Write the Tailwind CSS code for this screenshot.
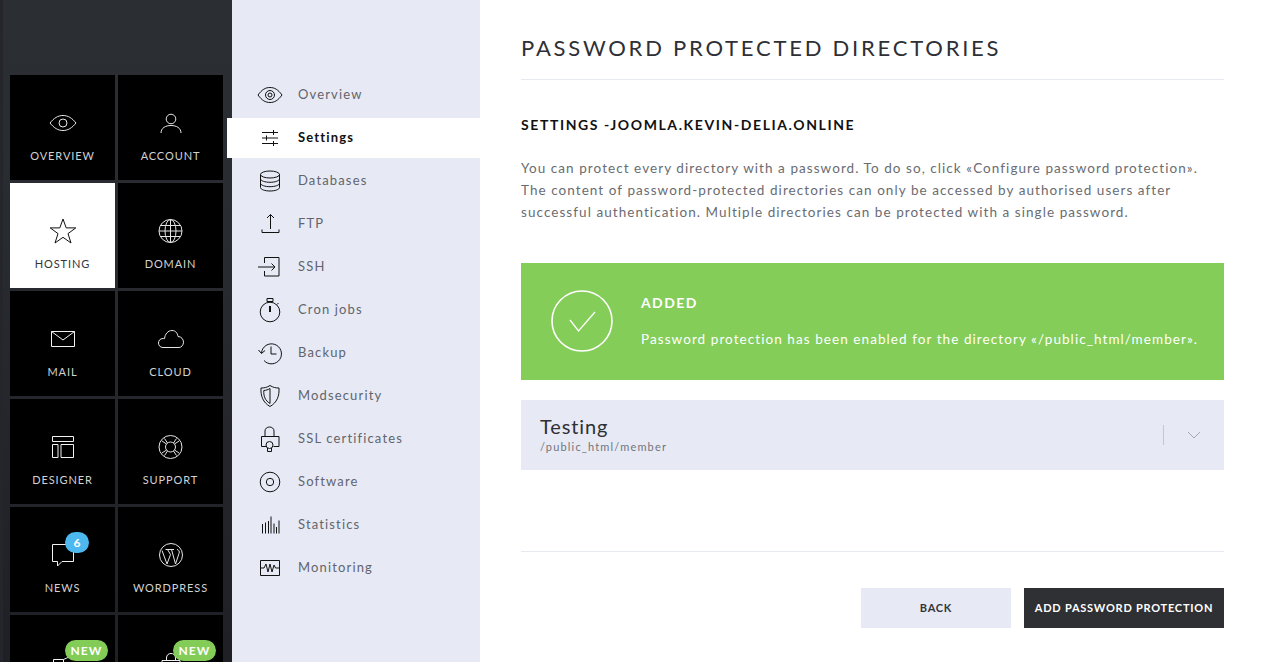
<!DOCTYPE html>
<html lang="en">
  <head>
    <meta charset="UTF-8" />
    <title>Password protected directories</title>
    <script src="https://cdn.jsdelivr.net/npm/@tailwindcss/browser@4"></script>
  </head>
  <body class="bg-white h-screen overflow-hidden font-['Lato','Liberation_Sans',sans-serif]">
    <div class="flex h-[662px] overflow-hidden">
      <!-- Tile sidebar -->
      <aside class="w-[232px] shrink-0 h-full pt-[75px] pl-[7px] border-l-[3px] border-[#24262b] bg-[linear-gradient(180deg,#2b2e33_0%,#282b30_35%,#1f2026_100%)]">
        <div class="grid grid-cols-[105px_105px] auto-rows-[105px] gap-[3px] text-[#d2d2d2] text-[11px] tracking-[0.9px]">
          <a class="bg-black flex flex-col items-center pt-[32px]">
            <svg class="w-8 h-8" viewBox="0 0 32 32" fill="none" stroke="#e6e6e6"><path d="M3 16C7 11 11 8.5 16 8.5S25 11 29 16C25 21 21 23.5 16 23.5S7 21 3 16Z"/><circle cx="16" cy="16" r="4"/></svg>
            <span class="mt-[9px] leading-[16px]">OVERVIEW</span>
          </a>
          <a class="bg-black flex flex-col items-center pt-[32px]">
            <svg class="w-8 h-8" viewBox="0 0 32 32" fill="none" stroke="#e6e6e6"><circle cx="16" cy="12" r="4.8"/><path d="M6 26C6 21 10.5 18.5 16 18.5S26 21 26 26"/></svg>
            <span class="mt-[9px] leading-[16px]">ACCOUNT</span>
          </a>
          <a class="bg-white text-[#33353a] flex flex-col items-center pt-[32px]">
            <svg class="w-8 h-8" viewBox="0 0 32 32" fill="none" stroke="#111"><path d="M16 4L19.2 12.9H28.8L21 18.6L24 28L16 22.3L8 28L11 18.6L3.2 12.9H12.8Z"/></svg>
            <span class="mt-[9px] leading-[16px]">HOSTING</span>
          </a>
          <a class="bg-black flex flex-col items-center pt-[32px]">
            <svg class="w-8 h-8" viewBox="0 0 32 32" fill="none" stroke="#e6e6e6"><circle cx="15.5" cy="16" r="11.5"/><ellipse cx="15.5" cy="16" rx="5.5" ry="11.5"/><path d="M15.5 4.5V27.5M4 16H27M5.5 10.5H25.5M5.5 21.5H25.5"/></svg>
            <span class="mt-[9px] leading-[16px]">DOMAIN</span>
          </a>
          <a class="bg-black flex flex-col items-center pt-[32px]">
            <svg class="w-8 h-8" viewBox="0 0 32 32" fill="none" stroke="#f2f2f2"><path d="M4.5 8.5H27.5V23.5H4.5ZM4.5 8.5L16 17L27.5 8.5"/></svg>
            <span class="mt-[9px] leading-[16px]">MAIL</span>
          </a>
          <a class="bg-black flex flex-col items-center pt-[32px]">
            <svg class="w-8 h-8" viewBox="0 0 32 32" fill="none" stroke="#e6e6e6"><path d="M8 24.5C5 24.5 3.5 22.3 3.5 20S5 15.5 8 15.5C8.5 15.5 9 15.5 9.5 15.7C10 11 13 7.5 17 7.5C20.5 7.5 22.5 10 23 13.5C26.5 13.5 28.5 16.5 28.5 19.2S26.5 24.5 24 24.5Z"/></svg>
            <span class="mt-[9px] leading-[16px]">CLOUD</span>
          </a>
          <a class="bg-black flex flex-col items-center pt-[32px]">
            <svg class="w-8 h-8" viewBox="0 0 32 32" fill="none" stroke="#f2f2f2"><path d="M5.5 5.5H26.5V10.5H5.5ZM5.5 13.5H11V26.5H5.5ZM14 13.5H26.5V26.5H14Z"/></svg>
            <span class="mt-[9px] leading-[16px]">DESIGNER</span>
          </a>
          <a class="bg-black flex flex-col items-center pt-[32px]">
            <svg class="w-8 h-8" viewBox="0 0 32 32" fill="none" stroke="#e6e6e6"><circle cx="15.5" cy="16" r="11.5"/><circle cx="15.5" cy="16" r="5"/><path d="M9.5 7.5L12.5 12M21.5 7.5L18.5 12M9.5 24.5L12.5 20M21.5 24.5L18.5 20M7 10L11.5 13M24 10L19.5 13M7 22L11.5 19M24 22L19.5 19"/></svg>
            <span class="mt-[9px] leading-[16px]">SUPPORT</span>
          </a>
          <a class="relative bg-black flex flex-col items-center pt-[32px]">
            <svg class="w-8 h-8" viewBox="0 0 32 32" fill="none" stroke="#f2f2f2"><path d="M5.5 5.5H26.5V22.5H15L10.5 27V22.5H5.5Z"/></svg>
            <span class="absolute left-[55px] top-[25px] w-[24px] h-[21px] rounded-full bg-[#4db7ef] text-white text-[12px] font-bold tracking-normal text-center leading-[21px]">6</span>
            <span class="mt-[9px] leading-[16px]">NEWS</span>
          </a>
          <a class="bg-black flex flex-col items-center pt-[32px]">
            <svg class="w-8 h-8" viewBox="0 0 32 32" fill="none" stroke="#e6e6e6"><circle cx="16" cy="16" r="11.5"/><path d="M7 11.5L12 25L15.5 15.5L12.5 10.5M10.5 10.5H19M16.5 10.5L20.5 25L24 14.5C25 12.5 23.5 10.5 22 10.5"/></svg>
            <span class="mt-[9px] leading-[16px]">WORDPRESS</span>
          </a>
          <a class="relative bg-black flex flex-col items-center pt-[32px]">
            <svg class="w-8 h-8" viewBox="0 0 32 32" fill="none" stroke="#f2f2f2"><path d="M6.5 12.5H16.5V24H6.5ZM16.5 12.5L22 10"/></svg>
            <span class="absolute left-[55px] top-[25px] w-[43px] h-[21px] rounded-full bg-[#82cc57] text-white text-[12px] font-bold tracking-[1px] text-center leading-[21px]">NEW</span>
          </a>
          <a class="relative bg-black flex flex-col items-center pt-[32px]">
            <svg class="w-8 h-8" viewBox="0 0 32 32" fill="none" stroke="#f2f2f2"><path d="M11.5 13.5V11C11.5 8 13.5 6.5 16 6.5S20.5 8 20.5 11V13.5M7 13.5H25V28H7Z"/></svg>
            <span class="absolute left-[55px] top-[25px] w-[43px] h-[21px] rounded-full bg-[#82cc57] text-white text-[12px] font-bold tracking-[1px] text-center leading-[21px]">NEW</span>
          </a>
        </div>
      </aside>

      <!-- Section nav -->
      <nav class="w-[248px] shrink-0 h-full bg-[#e7eaf4] pt-[75px] text-[13px] tracking-[1.15px] text-[#62646d]">
        <a class="h-10 mb-[3px] flex items-center pl-[22px] gap-3">
          <svg class="w-8 h-8 -mt-[1px]" viewBox="0 0 32 32" fill="none" stroke="#111"><path d="M4 16C8 10.5 11.5 8.5 16 8.5S24 10.5 28 16C24 21.5 20.5 23.5 16 23.5S8 21.5 4 16Z"/><circle cx="16" cy="16" r="4.5"/><circle cx="16" cy="16" r="2"/></svg>
          <span class="-mt-[1px]">Overview</span>
        </a>
        <a class="h-10 mb-[3px] -ml-[5px] flex items-center pl-[27px] gap-3 bg-white font-bold text-[#111]">
          <svg class="w-8 h-8 -mt-[1px]" viewBox="0 0 32 32" fill="none" stroke="#111"><path d="M8 10.5H24M8 16H24M8 21.5H24M19.5 8V13M12.5 13.5V18.5M19.5 19V24"/></svg>
          <span class="-mt-[1px]">Settings</span>
        </a>
        <a class="h-10 mb-[3px] flex items-center pl-[22px] gap-3">
          <svg class="w-8 h-8 -mt-[1px]" viewBox="0 0 32 32" fill="none" stroke="#111"><ellipse cx="16" cy="9.5" rx="9.5" ry="3.5"/><path d="M6.5 9.5V22.5C6.5 24.5 11 26 16 26S25.5 24.5 25.5 22.5V9.5M6.5 13.8C6.5 15.8 11 17.3 16 17.3S25.5 15.8 25.5 13.8M6.5 18.2C6.5 20.2 11 21.7 16 21.7S25.5 20.2 25.5 18.2"/></svg>
          <span class="-mt-[1px]">Databases</span>
        </a>
        <a class="h-10 mb-[3px] flex items-center pl-[22px] gap-3">
          <svg class="w-8 h-8 -mt-[1px]" viewBox="0 0 32 32" fill="none" stroke="#111"><path d="M16.5 6.5V21M13 10L16.5 6.5L20 10M8 21.5V24.5H25V21.5"/></svg>
          <span class="-mt-[1px]">FTP</span>
        </a>
        <a class="h-10 mb-[3px] flex items-center pl-[22px] gap-3">
          <svg class="w-8 h-8 -mt-[1px]" viewBox="0 0 32 32" fill="none" stroke="#111"><path d="M10.5 12V6.5H25V25H10.5V20M4 16H21M17.5 12.5L21 16L17.5 19.5"/></svg>
          <span class="-mt-[1px]">SSH</span>
        </a>
        <a class="h-10 mb-[3px] flex items-center pl-[22px] gap-3">
          <svg class="w-8 h-8 -mt-[1px]" viewBox="0 0 32 32" fill="none" stroke="#111"><circle cx="16" cy="18" r="9.8"/><path d="M13 4.5H19V7.5H13ZM16 7.5V8.5M23 10.5L24.5 9"/><path d="M16 12V18" stroke-width="2"/></svg>
          <span class="-mt-[1px]">Cron jobs</span>
        </a>
        <a class="h-10 mb-[3px] flex items-center pl-[22px] gap-3">
          <svg class="w-8 h-8 -mt-[1px]" viewBox="0 0 32 32" fill="none" stroke="#111"><path d="M7.5 16A10 10 0 1 1 10 23.5M4.5 13L7.5 16.5L11 13.5M17 9.5V17H22.5"/></svg>
          <span class="-mt-[1px]">Backup</span>
        </a>
        <a class="h-10 mb-[3px] flex items-center pl-[22px] gap-3">
          <svg class="w-8 h-8 -mt-[1px]" viewBox="0 0 32 32" fill="none" stroke="#111"><path d="M16 5.5C19 7.5 22 8 25 8C25.5 16 23 22.5 16 26.5C9 22.5 6.5 16 7 8C10 8 13 7.5 16 5.5Z"/><path d="M16 8.5V23.5C11 20.5 9.5 16 9.8 10.5C12 10.3 14 9.7 16 8.5Z"/></svg>
          <span class="-mt-[1px]">Modsecurity</span>
        </a>
        <a class="h-10 mb-[3px] flex items-center pl-[22px] gap-3">
          <svg class="w-8 h-8 -mt-[1px]" viewBox="0 0 32 32" fill="none" stroke="#111"><path d="M11 13V8C11 5.5 13 4 15.5 4S20 5.5 20 8V13M12 23.5H7.5V13.5H25V23.5H19.5"/><circle cx="15.5" cy="22" r="3.5"/><path d="M13.5 25V28.5H17.5V25"/></svg>
          <span class="-mt-[1px]">SSL certificates</span>
        </a>
        <a class="h-10 mb-[3px] flex items-center pl-[22px] gap-3">
          <svg class="w-8 h-8 -mt-[1px]" viewBox="0 0 32 32" fill="none" stroke="#111"><circle cx="16" cy="16" r="9.8"/><circle cx="16" cy="16" r="3.7"/></svg>
          <span class="-mt-[1px]">Software</span>
        </a>
        <a class="h-10 mb-[3px] flex items-center pl-[22px] gap-3">
          <svg class="w-8 h-8 -mt-[1px]" viewBox="0 0 32 32" fill="none" stroke="#111"><path d="M8.5 24.5V15M11.5 24.5V13.5M14.5 24.5V12M17 24.5V7.5M20 24.5V14.5M22.5 24.5V18M25 24.5V11.5"/></svg>
          <span class="-mt-[1px]">Statistics</span>
        </a>
        <a class="h-10 mb-[3px] flex items-center pl-[22px] gap-3">
          <svg class="w-8 h-8 -mt-[1px]" viewBox="0 0 32 32" fill="none" stroke="#111"><path d="M6.5 8.5H25.5V23.5H6.5ZM6.5 16H10L12 12L14 20L16 12L18 20L20 13L21.5 16H25.5"/></svg>
          <span class="-mt-[1px]">Monitoring</span>
        </a>
      </nav>

      <!-- Main content -->
      <main class="flex-1 pl-[41px] pr-[40px] text-[#2e3035]">
        <h1 class="pt-[35px] pb-[18px] border-b border-[#e7e9f2] text-[22px] leading-[26px] tracking-[2.77px]">PASSWORD PROTECTED DIRECTORIES</h1>
        <h2 class="mt-[36px] text-[14px] leading-[18px] font-bold tracking-[1.6px] text-[#111]">SETTINGS -JOOMLA.KEVIN-DELIA.ONLINE</h2>
        <p class="mt-[23px] text-[13.5px] leading-[22px] tracking-[1.06px] text-[#6a6c72]">
          You can protect every directory with a password. To do so, click «Configure password protection».<br />
          The content of password-protected directories can only be accessed by authorised users after<br />
          successful authentication. Multiple directories can be protected with a single password.
        </p>
        <div class="mt-[40px] h-[117px] bg-[#84cd58] flex items-center pl-[30px] pb-[2px] text-white">
          <svg class="w-[62px] h-[62px] shrink-0" viewBox="0 0 62 62" fill="none" stroke="#fff"><circle cx="31" cy="31" r="30" stroke-width="1.6"/><path d="M19 30L27.5 41L44 22" stroke-width="1.3"/></svg>
          <div class="ml-[28px]">
            <div class="text-[14px] leading-[18px] font-bold tracking-[1.4px]">ADDED</div>
            <div class="mt-[18px] text-[13.5px] leading-[18px] tracking-[1.07px]">Password protection has been enabled for the directory «/public_html/member».</div>
          </div>
        </div>
        <div class="mt-[20px] h-[70px] bg-[#e7eaf4] flex items-center justify-between pl-[19px]">
          <div class="pb-[3px]">
            <div class="text-[20px] leading-[24px] tracking-[0.9px] text-[#2e3035]">Testing</div>
            <div class="mt-[2px] text-[11px] leading-[14px] tracking-[1.17px] text-[#72747c]">/public_html/member</div>
          </div>
          <div class="flex items-center">
            <div class="w-px h-5 bg-[#c4c7d3]"></div>
            <svg class="w-[14px] h-[8px] mx-[23px]" viewBox="0 0 14 8" fill="none" stroke="#a5a8b4"><path d="M1 1L7 7L13 1"/></svg>
          </div>
        </div>
        <div class="mt-[81px] border-t border-[#e7e9f2] pt-[36px] flex justify-end gap-[13px] text-[11px] font-bold tracking-[0.75px]">
          <button class="w-[150px] h-10 bg-[#e7eaf4] text-[#33353a]">BACK</button>
          <button class="w-[200px] h-10 bg-[#2f3034] text-white">ADD PASSWORD PROTECTION</button>
        </div>
      </main>
    </div>
  </body>
</html>
